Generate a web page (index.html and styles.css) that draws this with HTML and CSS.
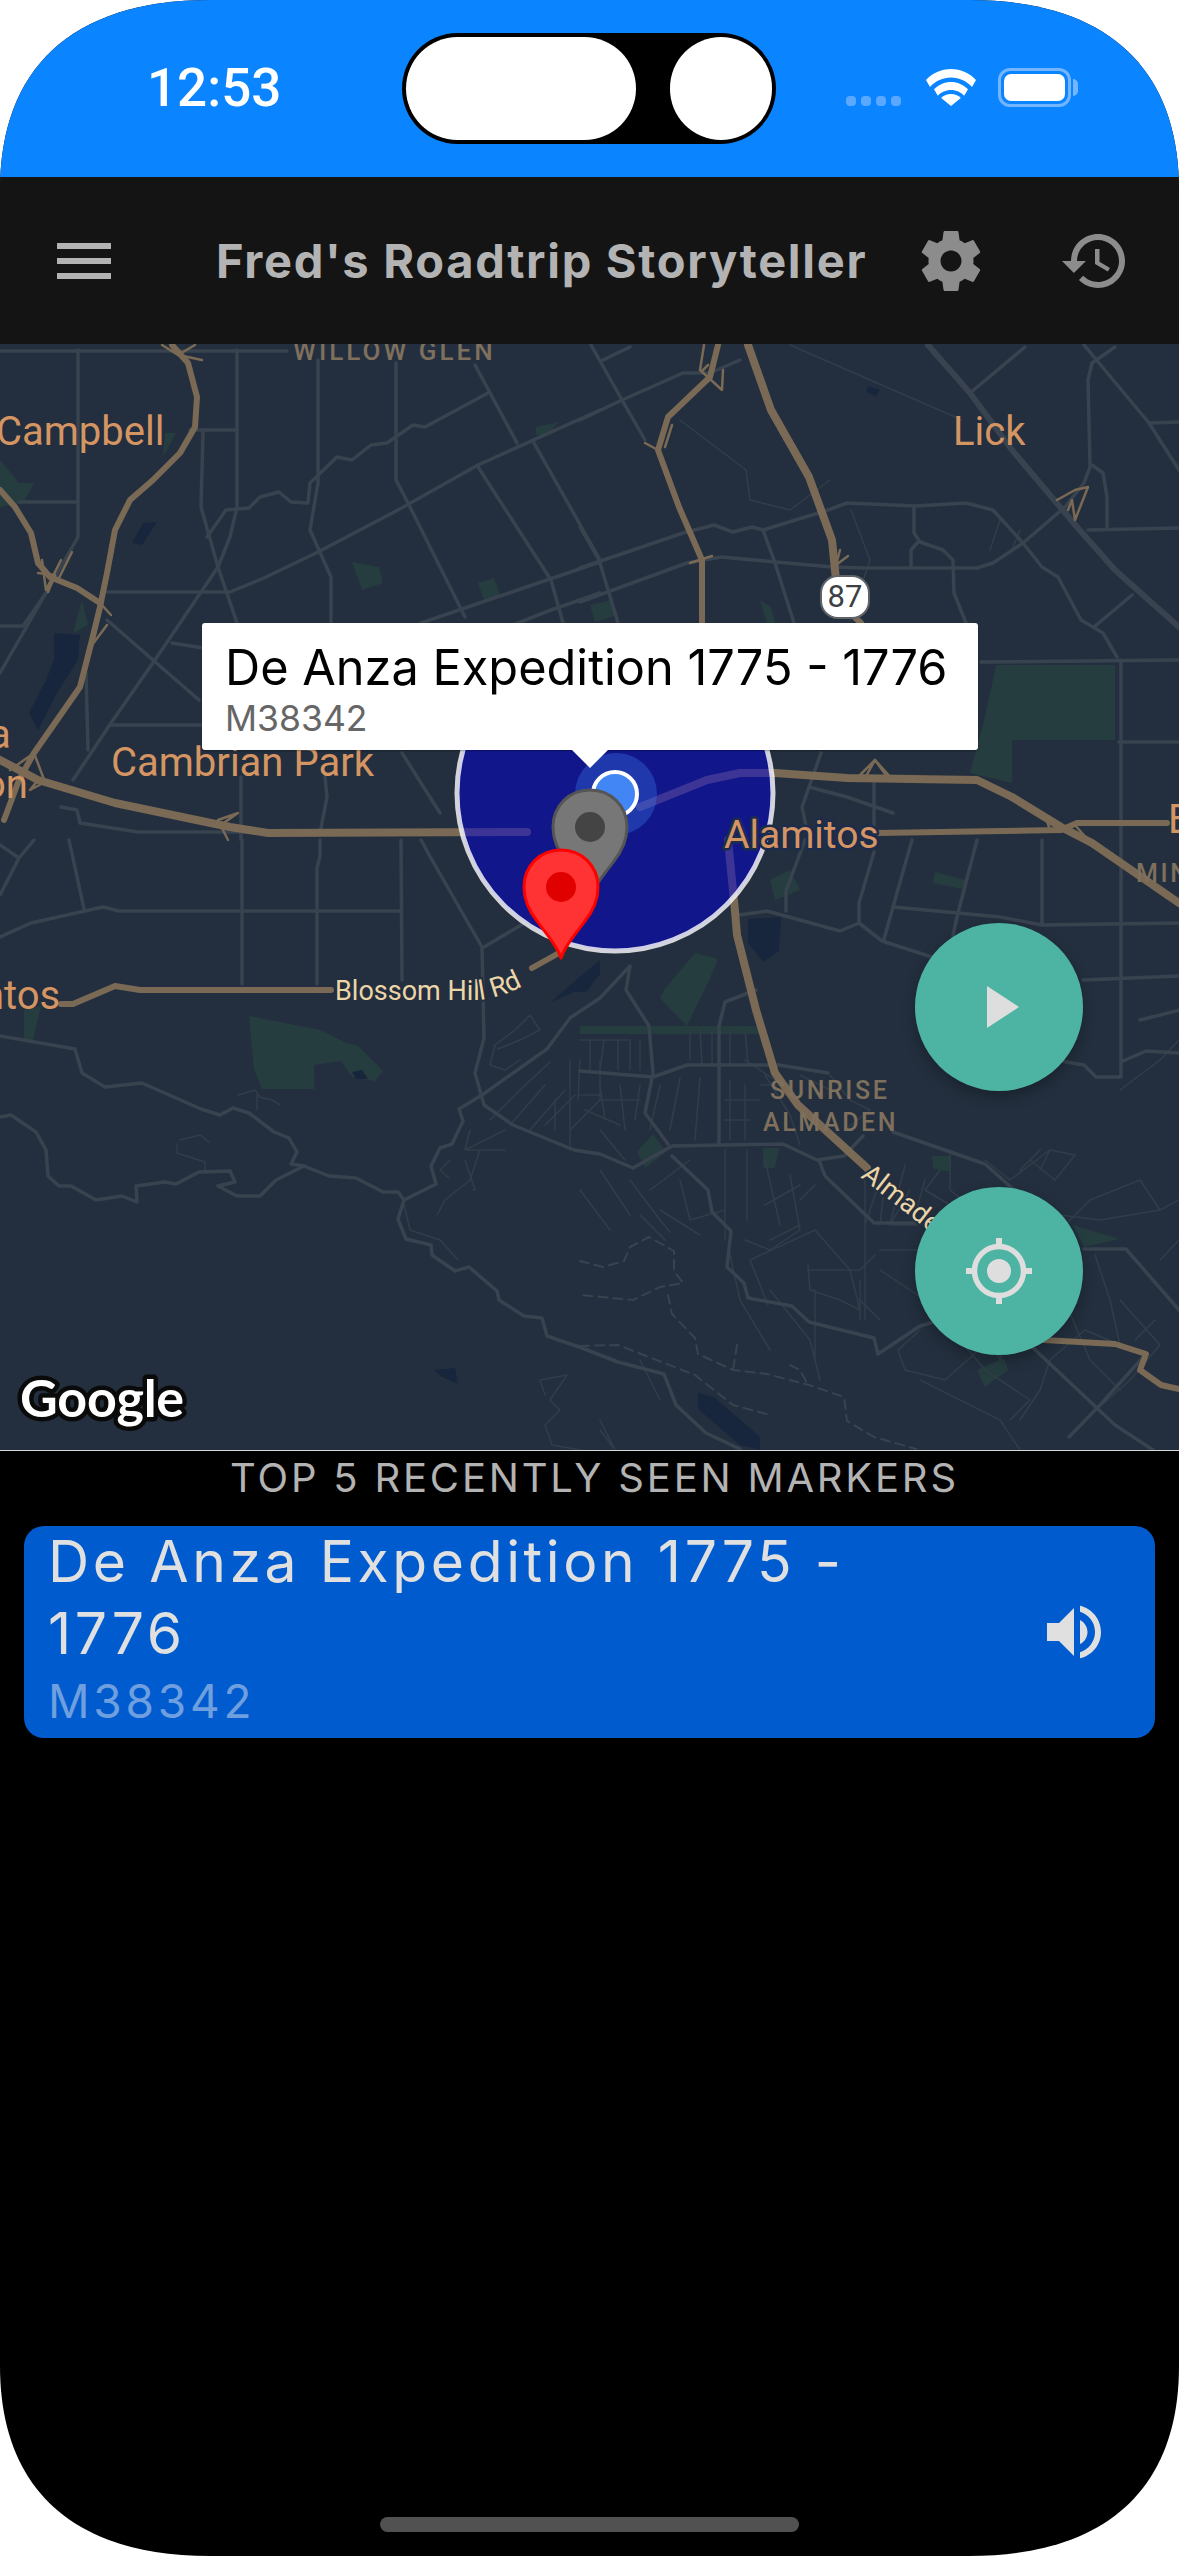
FILE: index.html
```html
<!DOCTYPE html>
<html lang="en">
<head>
<meta charset="utf-8">
<title>Fred's Roadtrip Storyteller</title>
<link rel="stylesheet" href="styles.css">
</head>
<body>
<div class="phone">
  <header class="status">
    <div class="time">12:53</div>
    <div class="island"><span class="island-pill"></span><span class="island-dot"></span></div>
    <div class="status-icons">
      <div class="signal"><i></i><i></i><i></i><i></i></div>
      <svg class="wifi" viewBox="0 0 50 37"><path d="M25 0C15 0 6.500 4 0 11l4 7c5.500-6 13-9.500 21-9.500S40.500 12 46 18l4-7C43.500 4 35 0 25 0z"/><path d="M25 13c-6.500 0-12.500 2.700-17 7.300l3.800 6.500C15 23.200 19.800 21 25 21s10 2.200 13.200 5.800l3.800-6.500C37.500 15.700 31.500 13 25 13z"/><path d="M25 25c-3.800 0-7.300 1.500-9.800 4L25 37l9.800-8c-2.500-2.500-6-4-9.800-4z"/></svg>
      <div class="battery"><div class="battery-level"></div></div>
      <div class="battery-nub"></div>
    </div>
  </header>

  <nav class="appbar">
    <svg class="icon menu" viewBox="0 0 24 24"><path d="M3 18h18v-2H3v2zm0-5h18v-2H3v2zm0-7v2h18V6H3z"/></svg>
    <h1 class="title">Fred's Roadtrip Storyteller</h1>
    <svg class="icon gear" viewBox="0 0 24 24"><path d="M19.430 12.980c.04-.32.07-.64.07-.98s-.03-.66-.07-.98l2.110-1.650c.19-.15.24-.42.12-.64l-2-3.460c-.12-.22-.39-.3-.61-.22l-2.490 1c-.52-.4-1.080-.73-1.690-.98l-.38-2.650C14.460 2.180 14.250 2 14 2h-4c-.25 0-.46.18-.49.42l-.38 2.650c-.61.25-1.170.59-1.690.98l-2.490-1c-.23-.09-.49 0-.61.22l-2 3.460c-.13.22-.07.49.12.64l2.110 1.650c-.04.32-.07.65-.07.98s.03.66.07.98l-2.110 1.650c-.19.15-.24.42-.12.64l2 3.460c.12.22.39.3.61.22l2.490-1c.52.4 1.080.73 1.690.98l.38 2.650c.03.24.24.42.49.42h4c.25 0 .46-.18.49-.42l.38-2.650c.61-.25 1.170-.59 1.690-.98l2.490 1c.23.09.49 0 .61-.22l2-3.460c.12-.22.07-.49-.12-.64l-2.110-1.650zM12 15.500c-1.930 0-3.500-1.570-3.500-3.500s1.570-3.500 3.500-3.500 3.500 1.570 3.500 3.500-1.570 3.500-3.500 3.500z"/></svg>
    <svg class="icon history" viewBox="0 0 24 24"><path d="M13 3c-4.970 0-9 4.030-9 9H1l3.890 3.890.07.14L9 12H6c0-3.870 3.130-7 7-7s7 3.130 7 7-3.130 7-7 7c-1.930 0-3.680-.79-4.940-2.060l-1.420 1.420C8.270 19.990 10.510 21 13 21c4.970 0 9-4.030 9-9s-4.030-9-9-9zm-1 5v5l4.280 2.540.72-1.210-3.500-2.080V8H12z"/></svg>
  </nav>

  <section class="map">
    <svg class="map-canvas" viewBox="0 344 1179 1106">
      <g class="park">
        <path d="M996 665H1115V740H1012V783L970 773 985 717z"/>
        <path d="M0 460 19 483H34L23 503 0 507z"/>
        <path d="M165 433H176L163 457z"/>
        <path d="M82 600 73 633 88 625z"/>
        <path d="M352 562 379 567 383 583 362 590z"/>
        <path d="M478 583 494 578 501 597 484 600z"/>
        <path d="M536 427 559 422 547 435H536z"/>
        <path d="M249 1016 321 1030 344 1042 358 1046 383 1071 375 1081 352 1077 341 1061 314 1065V1089H262L254 1069z"/>
        <path d="M664 990 695 953 718 959 710 978 687 1026 660 998z"/>
        <path d="M977 1370 1004 1358 1008 1370 985 1387z"/>
        <path d="M1073 1225 1119 1239 1084 1247z"/>
        <path d="M935 872 966 880 962 889 933 883z"/>
        <path d="M637 1152 653 1134 666 1152 645 1168z"/>
        <path d="M763 1148H779L775 1168H763z"/>
        <path d="M932 1156H951V1172L933 1168z"/>
        <path d="M590 605 612 600 618 615 595 622z"/>
        <path d="M760 600 771 607 775 623H767z"/>
        <path d="M24 1010 41 1006 33 1040 24 1040z"/>
        <path d="M580 1026H760V1034H580z"/>
        <path d="M770 880 790 870 800 890 775 900z"/>
      </g>
      <g class="water">
        <path d="M54 633 80 635 78 660 57 693 38 730 29 713 46 680 54 660z"/>
        <path d="M132 543 143 523 157 522 142 545z"/>
        <path d="M748 919 781 917 779 951 763 962 748 943z"/>
        <path d="M698 1393 714 1397 760 1437V1450L740 1445 698 1409z"/>
        <path d="M551 1002 574 992H586L600 974V960L570 985z"/>
        <path d="M352 1072 362 1070 368 1079 356 1079z"/>
        <path d="M434 1370 455 1368 458 1384 440 1376z"/>
        <path d="M868 386 880 390 876 396 866 392z"/>
      </g>
      <g class="road-thin">
        <path d="M790 345 962 420"/>
        <path d="M680 420 746 470 750 500 790 510 830 480"/>
        <path d="M851 510 870 560 850 620"/>
        <path d="M1000 520 990 550M1020 530 1012 550"/>
        <path d="M498 1049 520 1040 540 1030 530 1015 515 1030 495 1045 490 1065 505 1070 520 1060"/>
        <path d="M490 1120 520 1090 550 1062M510 1125 545 1085M530 1130 565 1090M545 1125 575 1095M555 1130V1100M570 1130 600 1100"/>
        <path d="M570 1060V1150M580 1060 578 1100M600 1060V1100M580 1095H600"/>
        <path d="M470 1130 465 1150 505 1130M465 1150 505 1150M480 1150 470 1180 445 1200 437 1215"/>
        <path d="M465 1160 475 1190H473M450 1160 440 1170 449 1178"/>
        <path d="M238 1095 255 1090 260 1097 272 1100 280 1105M257 1095V1110"/>
        <path d="M180 1140 200 1135 209 1142M177 1145V1153L205 1162V1172"/>
        <path d="M404 1205 410 1230 440 1240 458 1260"/>
        <path d="M580 1040H630M590 1040V1070M604 1040 600 1070M618 1040V1070M630 1040V1070M640 1040V1070"/>
        <path d="M600 1085 605 1120M620 1085 625 1130M640 1085 635 1120M600 1100H640M585 1110 620 1125M600 1130 625 1160M660 1085 650 1130M680 1078 670 1130M700 1078 695 1140"/>
        <path d="M690 1030V1060M700 1030 702 1065M712 1030V1065M730 1030V1065M745 1030 748 1065M765 1030 755 1010"/>
        <path d="M730 1080V1140M745 1085V1140M760 1085H790M725 1100H760M725 1120H750"/>
        <path d="M765 1075 790 1115 800 1145M745 1060 790 1090M800 1075 830 1090M830 1075 850 1100 870 1110 845 1130"/>
        <path d="M580 1190 610 1230M600 1170 630 1215M630 1180 660 1220 670 1232M650 1190 690 1160M680 1180 690 1220 725 1210M660 1210 700 1235M640 1215 665 1240"/>
        <path d="M725 1150V1240M747 1150V1220M765 1160 780 1225M790 1175 800 1230 770 1250 745 1240M765 1205 800 1185M800 1200 815 1185M770 1240 800 1225"/>
        <path d="M815 1230 750 1260 768 1305M815 1230 850 1270 860 1310 840 1300 810 1290 808 1265M810 1270H860L875 1255M860 1280 860 1320"/>
        <path d="M865 1160V1320M880 1180 865 1225M885 1180 880 1225M905 1165 890 1225 910 1190M925 1180 912 1225M940 1170 925 1190 950 1205M890 1225H960M880 1250H970M880 1270 925 1300"/>
        <path d="M950 1150V1190L975 1210 985 1260 1000 1320M985 1160 1010 1180 1050 1150 1040 1170"/>
        <path d="M1010 1186 1060 1230 1090 1200 1140 1180 1160 1210 1179 1200M1040 1150 1020 1170M1050 1150 1075 1155 1055 1180 1030 1160"/>
        <path d="M1040 1300 1012 1310 1000 1360 990 1340 945 1380 905 1370 898 1350 920 1330"/>
        <path d="M1095 1255 1110 1300 1120 1345 1085 1330 1050 1360 1040 1390 1020 1420M1060 1290 1090 1360M1120 1300 1160 1345 1130 1380 1085 1420M1090 1360 1120 1390M1135 1340 1155 1320"/>
        <path d="M960 1340 985 1370 1030 1400 1010 1420M920 1380 960 1400 1000 1420"/>
        <path d="M1120 1090 1160 1060 1179 1040M1160 1260 1179 1240M1000 1190 1060 1215 1100 1220 1160 1210"/>
        <path d="M730 1255 740 1300 770 1350M770 1290 810 1340 820 1380M815 1290V1360M860 1300 880 1320M1000 1420 1020 1450M640 1360 660 1400M600 1420 615 1450 600 1430"/>
        <path d="M545 1395 540 1380 567 1375 550 1400 560 1410 545 1425 552 1445 580 1450"/>
      </g>
      <g class="road-minor">
        <path d="M0 351H287"/>
        <path d="M78 350V537L46 593 0 673"/>
        <path d="M237 350V507L230 537 218 567 157 657 111 723 73 780"/>
        <path d="M318 360V483L310 530 331 577V623"/>
        <path d="M396 363V480L408 503 465 617"/>
        <path d="M475 365 517 443M534 443 600 560"/>
        <path d="M207 537 226 510 249 508 260 497 279 492 291 502 308 503 310 483 337 457 352 460 371 445 387 443 413 425 425 427 488 393"/>
        <path d="M600 410 478 465 398 510 318 552 264 578 230 592H115 107"/>
        <path d="M190 430H237M203 433 201 507 218 567 237 623"/>
        <path d="M478 467 551 580 563 623M600 562 547 580 421 623"/>
        <path d="M600 593 551 610 500 630"/>
        <path d="M19 502H78M0 626H23L46 593"/>
        <path d="M107 620 199 700M111 725H203M172 643 203 648M86 673 88 750"/>
        <path d="M241 777V840M325 777 327 797 320 833M61 807 77 810 80 823 138 832H280"/>
        <path d="M402 753 440 813M0 895 19 858 34 840M0 845 19 858M69 840 84 909"/>
        <path d="M0 937 31 923 103 907 119 911H400M242 840V984M320 840V856L317 868V984M401 840 402 980"/>
        <path d="M421 840 432 860 482 947 484 1038 475 1073 484 1105 513 1125 574 1150 600 1154 633 1168 672 1146 783 1144 817 1160 844 1156 863 1136"/>
        <path d="M484 947 528 921"/>
        <path d="M0 1036 75 1049 82 1073 105 1087 142 1083 201 1109 220 1115 233 1108 249 1113 274 1132 289 1138 297 1152 291 1164 304 1166 329 1176 356 1178 383 1192H398L404 1200 436 1184 431 1166 440 1148 452 1144 463 1121 459 1109 482 1095 547 1049 570 1018 600 998 630 966 626 990 649 1026 653 1073 645 1113 668 1144"/>
        <path d="M0 1117 11 1115 36 1132 46 1150 48 1176 59 1186H71L96 1200 122 1196 137 1202 136 1186 165 1182 176 1184 199 1172 230 1171 235 1182 218 1186 237 1196H260L276 1180 304 1166"/>
        <path d="M404 1200 398 1219 406 1239 431 1245 432 1255 455 1271 469 1267 497 1291 499 1300 524 1316 542 1318 547 1336 582 1348 618 1362 664 1374 676 1405 706 1433 740 1449"/>
        <path d="M739 915 767 911 840 931 859 923 882 941 932 957M859 923V903L874 852M884 939 893 907 912 840M893 907 958 913 977 840M958 913 953 935M958 913 1000 917 1042 925 1179 923M1042 840V925"/>
        <path d="M1121 660V1077H1096L1084 1065 1061 1061M1083 980 1179 976M1123 1061 1146 1051 1179 1053"/>
        <path d="M580 1071 653 1077 687 1065H779L828 1073"/>
        <path d="M719 1026V1144M719 1026 725 1002 756 990"/>
        <path d="M672 1156 708 1190 712 1212 731 1231 727 1267 744 1283 748 1298 792 1306 809 1322 874 1338 878 1354 920 1326 962 1314 1044 1340"/>
        <path d="M819 1160 825 1176 874 1223H916"/>
        <path d="M893 1132 985 1164 1012 1188M1031 1346 1115 1425 1153 1450M1084 1249H1126L1179 1310M1146 1354 1100 1405 1069 1437"/>
        <path d="M809 787 847 797 893 813M874 777V840M821 753 802 807 809 840M786 911V891L805 840"/>
        <path d="M1115 347 1092 363 1088 380 1090 467 1084 483 1065 507 1023 543 993 563 977 568H863L832 567 721 557 687 563 580 602"/>
        <path d="M1084 345 1149 423 1179 470M1149 423 1179 422M1088 530 1179 528M1107 527V497L1103 473 1092 465"/>
        <path d="M828 510 847 503 916 506 966 503 993 510 1023 543 1042 567 1058 577 1081 620 1103 633 1117 657"/>
        <path d="M828 510 763 530 752 527 733 532 714 525 683 533 580 568M763 530 775 563 794 623"/>
        <path d="M914 506V533L920 542 943 550 953 560 954 593 966 623M911 567V550L918 542M1094 627 1132 595"/>
        <path d="M981 662 1179 660M1119 742H1179"/>
        <path d="M591 345 622 400 645 440M603 360 630 347M580 420 622 400 683 373H710L740 360M580 527 599 560 618 623"/>
        <path d="M970 393 1025 347"/>
        <path d="M1180 1010 1140 1020"/>
      </g>
      <path class="road-major" d="M928 345 970 393 1012 450 1077 527 1115 570 1179 627"/>
      <g class="trail">
        <path d="M580 1261 603 1267 624 1261 630 1247 649 1237 674 1251V1271L683 1283 660 1287 633 1300 580 1295"/>
        <path d="M668 1295 672 1314 695 1338 698 1354 733 1370 767 1374 809 1385 844 1397 847 1421 874 1437 916 1449"/>
        <path d="M580 1346 618 1345 695 1375 733 1405 770 1415"/>
        <path d="M737 1345 733 1370M790 1365 800 1370 808 1385"/>
      </g>
      <g class="road-hw">
        <path d="M172 345 188 363 197 397 195 427 180 453 153 480 130 500 115 530 107 573 100 607 92 640 80 687 57 720 34 753 19 780 4 820"/>
        <path d="M0 490 15 507 31 533 38 563 50 577 77 588 100 603"/>
        <path class="wide" d="M0 760 38 780 115 803 230 827 268 833 527 832"/>
        <path class="wide" d="M775 773 847 778 977 780 1012 797 1061 827 1092 843 1179 903"/>
        <path d="M878 833 1061 830 1077 823H1167"/>
        <path class="wide" d="M640 807 707 780 740 773H775"/>
        <path d="M718 345 710 377 668 417 658 450 679 507 702 560V623"/>
        <path class="wide" d="M748 345 771 410 809 477 832 540 836 580"/>
        <path d="M836 600 861 623"/>
        <path class="wide" d="M728 840 735 911 737 935 756 1010 775 1073 798 1105 867 1168"/>
        <path d="M1044 1340 1115 1344 1146 1354 1140 1370 1161 1385 1179 1389"/>
        <path d="M61 1004H73L115 986 140 990H331M532 968 559 953"/>
      </g>
      <g class="ramp">
        <path d="M42 560 46 590 61 560M38 573 55 575 48 592M72 552 58 580"/>
        <path d="M162 345 178 355 202 360M178 355 195 345"/>
        <path d="M100 603 111 615M107 625 92 645"/>
        <path d="M10 770 34 753 45 782 30 790 38 780"/>
        <path d="M225 822 238 813 218 820 228 840"/>
        <path d="M704 345 700 370 722 390 723 370M708 365 702 371"/>
        <path d="M645 443 658 450M665 447 672 425"/>
        <path d="M690 563 712 556"/>
        <path d="M840 550 836 565 848 556"/>
        <path d="M1057 500 1075 490 1088 487 1075 520 1072 500 1068 510"/>
        <path d="M855 780 875 760 893 780M875 760 865 778M875 760 888 778"/>
        <path d="M1045 815 1050 830M1075 825 1088 840"/>
      </g>

      <circle class="radius" cx="615" cy="793" r="158"/>

      <text class="label district willow" x="293" y="360">WILLOW GLEN</text>
      <text class="label city" x="-4" y="445">Campbell</text>
      <text class="label city" x="953" y="445">Lick</text>
      <text class="label city" x="111" y="776">Cambrian Park</text>
      <text class="label city" x="-11" y="748">a</text>
      <text class="label city" x="-17" y="798">on</text>
      <text class="label city" x="-18" y="1009">ntos</text>
      <text class="label city halo alamitos" x="724" y="848">Alamitos</text>
      <text class="label city" x="1168" y="833">E</text>
      <text class="label district" x="1136" y="882">MIN</text>
      <text class="label district" x="770" y="1099">SUNRISE</text>
      <text class="label district" x="763" y="1131">ALMADEN</text>
      <path id="blossom" class="guide" d="M335 1000H480Q515 995 540 974"/>
      <text class="label street"><textPath href="#blossom">Blossom Hill Rd</textPath></text>
      <text class="label street almaden" transform="translate(860 1177) rotate(38)">Almaden</text>

      <circle class="halo-dot" cx="616" cy="794" r="41"/>
      <circle class="user-dot" cx="615" cy="794" r="22"/>
      <g class="pin grey" transform="translate(590 827)">
        <path d="M0 71C-4 58-14 48-24 34-32 24-37 14-37 0-37-21-21-37 0-37S37-21 37 0C37 14 32 24 24 34 14 48 4 58 0 71Z"/>
        <circle r="15"/>
      </g>
      <g class="pin red" transform="translate(561 887)">
        <path d="M0 71C-4 58-14 48-24 34-32 24-37 14-37 0-37-21-21-37 0-37S37-21 37 0C37 14 32 24 24 34 14 48 4 58 0 71Z"/>
        <circle r="15"/>
      </g>
      <text class="google" x="20" y="1417">Google</text>
    </svg>

    <div class="shield">87</div>

    <div class="info">
      <div class="info-title">De Anza Expedition 1775 - 1776</div>
      <div class="info-sub">M38342</div>
    </div>

    <button class="fab fab-play" type="button">
      <svg viewBox="0 0 168 168"><path d="M72 63 104 84 72 105z"/></svg>
    </button>
    <button class="fab fab-locate" type="button">
      <svg viewBox="0 0 168 168"><circle cx="84" cy="84" r="12"/><circle class="ring" cx="84" cy="84" r="24.500"/><path d="M81 51h6v9h-6zM81 108h6v9h-6zM51 81h9v6h-9zM108 81h9v6h-9z"/></svg>
    </button>
  </section>

  <main class="recent">
    <h2 class="recent-heading">TOP 5 RECENTLY SEEN MARKERS</h2>
    <article class="card">
      <div class="card-text">
        <div class="card-title">De Anza Expedition 1775 - 1776</div>
        <div class="card-sub">M38342</div>
      </div>
      <svg class="icon speaker" viewBox="0 0 24 24"><path d="M3 9v6h4l5 5V4L7 9H3zm13.500 3c0-1.770-1.020-3.290-2.500-4.030v8.050c1.480-.73 2.500-2.250 2.500-4.020zM14 3.230v2.060c2.890.86 5 3.540 5 6.710s-2.110 5.850-5 6.710v2.060c4.010-.91 7-4.490 7-8.770s-2.990-7.860-7-8.770z"/></svg>
    </article>
  </main>

  <footer class="home"><div class="home-bar"></div></footer>
</div>
</body>
</html>
```
FILE: styles.css
```css
* { box-sizing: border-box; }
html, body { margin: 0; padding: 0; background: #fff; }
body { font-family: Inter, "Liberation Sans", sans-serif; }

.phone {
  width: 1179px;
  height: 2556px;
  clip-path: path("M0 190C0 70 70 0 210 0H969C1109 0 1179 70 1179 190V2366C1179 2486 1109 2556 969 2556H210C70 2556 0 2486 0 2366Z");
  overflow: hidden;
  background: #000;
  display: flex;
  flex-direction: column;
}

/* status bar */
.status {
  height: 177px;
  flex: none;
  background: #0a84ff;
  display: grid;
  grid-template-columns: 402px 374px 1fr;
  align-items: start;
}
.time {
  padding: 57px 0 0 147px;
  font: 500 53px/62px Roboto, sans-serif;
  color: #fff;
}
.island {
  margin-top: 33px;
  height: 111px;
  background: #000;
  border-radius: 56px;
  display: flex;
  justify-content: space-between;
  padding: 4px;
}
.island-pill { width: 230px; height: 103px; background: #fff; border-radius: 52px; }
.island-dot { width: 102px; height: 103px; background: #fff; border-radius: 52px; }

.status-icons { position: relative; display: flex; padding: 68px 0 0 70px; }
.signal { display: flex; gap: 5px; margin-top: 28px; }
.signal i { width: 10px; height: 10px; border-radius: 4px; background: #5aa9ff; }
.wifi { width: 50px; height: 37px; fill: #fff; margin: 1px 0 0 25px; }
.battery {
  width: 73px;
  height: 39px;
  margin-left: 22px;
  border: 3px solid #73b5ff;
  border-radius: 12px;
  padding: 3px;
}
.battery-level { height: 27px; width: 61px; background: #fff; border-radius: 7px; }
.battery-nub { width: 5px; height: 17px; margin: 11px 0 0 2px; background: #73b5ff; border-radius: 0 5px 5px 0; }

/* app bar */
.appbar {
  height: 167px;
  flex: none;
  background: #141414;
  display: flex;
  align-items: center;
  padding-left: 48px;
}
.icon { width: 72px; height: 72px; flex: none; }
.menu { fill: #b3b3b3; }
.gear, .history { fill: #8c8c8c; }
.title {
  margin: 0 0 0 96px;
  width: 699px;
  font: 700 47px/60px Inter, sans-serif;
  letter-spacing: 1.700px;
  color: #b3b3b3;
  white-space: nowrap;
}
.history { margin-left: 72px; }

/* map */
.map {
  position: relative;
  height: 1107px;
  flex: none;
  background: #232f3e;
  border-bottom: 1px solid #d8d8d8;
  overflow: hidden;
}
.map-canvas { display: block; width: 1179px; height: 1106px; font-family: Roboto, sans-serif; }
.map-canvas path { fill: none; stroke-linecap: round; stroke-linejoin: round; }
.map-canvas .park path { fill: #263d3f; }
.map-canvas .water path { fill: #17263c; }
.road-thin { stroke: #323d4a; stroke-width: 1.500px; }
.road-minor { stroke: #38434f; stroke-width: 3.500px; }
.map-canvas .road-major { stroke: #38434f; stroke-width: 6px; }
.trail { stroke: #38434f; stroke-width: 2px; stroke-dasharray: 9 6; }
.road-hw { stroke: #7a6a55; stroke-width: 6px; }
.map-canvas .road-hw .wide { stroke-width: 8px; }
.ramp { stroke: #7a6a55; stroke-width: 2.500px; }
.map-canvas .guide { stroke: none; }
.radius { fill: rgba(0, 0, 216, 0.5); stroke: rgba(255, 255, 255, 0.8); stroke-width: 5px; }
.label { font-family: Roboto, sans-serif; }
.city { font-size: 40px; fill: #d59563; }
.alamitos { font-size: 39px; }
.halo { stroke: #1d2c4d; stroke-width: 5px; paint-order: stroke; stroke-linejoin: round; }
.district { font-size: 25px; font-weight: 500; letter-spacing: 2.600px; fill: #7f705d; }
.willow { font-size: 26px; letter-spacing: 3px; }
.street { font-size: 27px; fill: #ecd6a8; stroke: #232f3e; stroke-width: 4px; paint-order: stroke; }
.almaden { font-size: 27px; }
.halo-dot { fill: rgba(66, 133, 244, 0.3); }
.user-dot { fill: #4285f4; stroke: #fff; stroke-width: 4px; }
.map-canvas .pin.grey path { fill: #777; stroke: #555; stroke-width: 3px; }
.pin.grey circle { fill: #444; }
.map-canvas .pin.red path { fill: #ff3333; stroke: #ff0000; stroke-width: 3px; }
.pin.red circle { fill: #e00000; }
.google {
  font-family: Lato, sans-serif;
  font-weight: 700;
  font-size: 52px;
  letter-spacing: -0.2px;
  fill: #fff;
  stroke: #0a0a0a;
  stroke-width: 9px;
  stroke-linejoin: round;
  paint-order: stroke;
}

.shield {
  position: absolute;
  left: 820px;
  top: 231px;
  width: 50px;
  height: 44px;
  background: #fff;
  border: 2.500px solid #5f6368;
  border-radius: 18px;
  font: 400 31px/39px Roboto, sans-serif;
  text-align: center;
  color: #3c4043;
}

.info {
  position: absolute;
  left: 202px;
  top: 279px;
  width: 776px;
  height: 127px;
  padding: 14px 23px;
  background: #fff;
  border-radius: 3px;
  box-shadow: 0 1px 2px rgba(0, 0, 0, 0.3);
}
.info::after {
  content: "";
  position: absolute;
  left: 370px;
  top: 127px;
  border: 18px solid transparent;
  border-top-color: #fff;
  border-bottom: 0;
}
.info-title { font-size: 48.700px; line-height: 62px; color: #000; white-space: nowrap; }
.info-sub { font-size: 35.500px; line-height: 40px; color: #666; }

.fab {
  position: absolute;
  left: 915px;
  width: 168px;
  height: 168px;
  padding: 0;
  border: 0;
  border-radius: 50%;
  background: #4db3a2;
  box-shadow: 0 6px 14px rgba(0, 0, 0, 0.25);
}
.fab svg { display: block; width: 168px; height: 168px; fill: #dedede; }
.fab-play { top: 579px; }
.fab-locate { top: 843px; }
.fab .ring { fill: none; stroke: #dedede; stroke-width: 5.500px; }

/* recent list */
.recent { flex: 1; padding: 0 24px; }
.recent-heading {
  margin: 0;
  height: 75px;
  padding-left: 10px;
  font: 400 40px/53px Inter, sans-serif;
  letter-spacing: 2.800px;
  text-align: center;
  color: #b3b3b3;
  white-space: nowrap;
}
.card {
  height: 212px;
  background: #005cce;
  border-radius: 20px;
  display: flex;
  align-items: flex-start;
  padding: 0 0 0 24px;
}
.card-text { width: 990px; flex: none; }
.card-title {
  width: 830px;
  font-size: 57px;
  line-height: 72px;
  letter-spacing: 3.600px;
  color: #e0e0e0;
}
.card-sub { font-size: 46px; line-height: 62px; letter-spacing: 3.800px; color: #6f9fdf; }
.speaker { fill: #e0e0e0; margin: 70px 0 0 0; }

.home { height: 39px; flex: none; display: flex; justify-content: center; position: relative; }
.home-bar { position: absolute; left: 380px; top: 0; width: 419px; height: 15px; border-radius: 8px; background: #515151; }
```
